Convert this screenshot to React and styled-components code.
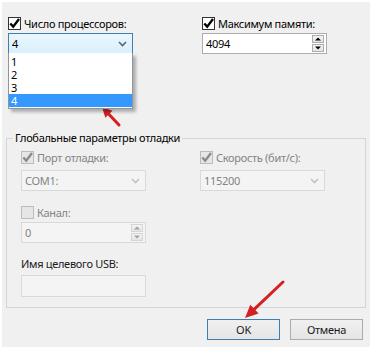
import React from 'react'
import styled, { createGlobalStyle } from 'styled-components'

const GlobalStyle = createGlobalStyle`
  html, body {
    margin: 0;
    padding: 0;
    background: #fff;
  }
  body {
    font-family: "Noto Sans", "Segoe UI", sans-serif;
    font-size: 11px;
    font-weight: 400;
    letter-spacing: -0.3px;
    color: #000;
  }
`

const Page = styled.div`
  position: relative;
  width: 370px;
  height: 348px;
  overflow: hidden;
`

const Dialog = styled.div`
  margin: 2px 0 0 2px;
  width: 368px;
  height: 345px;
  background: #f0f0f0;
  display: flex;
  flex-direction: column;
`

const TopGrid = styled.div`
  display: grid;
  grid-template-columns: 194px 1fr;
  padding: 15px 0 0 6px;
`

const Column = styled.div`
  display: flex;
  flex-direction: column;
  gap: ${p => p.$gap ?? 3}px;
`

const CheckRow = styled.label`
  display: flex;
  align-items: center;
  gap: 3px;
  height: 13px;
  color: ${p => (p.$disabled ? '#838383' : '#000')};
  white-space: nowrap;
`

const Box = styled.span`
  width: 13px;
  height: 13px;
  box-sizing: border-box;
  border: 1px solid ${p => (p.$disabled ? '#bcbcbc' : '#333')};
  background: ${p => (p.$disabled ? '#e6e6e6' : '#fff')};
  display: flex;
  align-items: center;
  justify-content: center;
  flex: none;
`

const Check = ({ checked, disabled, children }) => (
  <CheckRow $disabled={disabled}>
    <Box $disabled={disabled}>
      {checked && (
        <svg width="11" height="11" viewBox="0 0 11 11">
          <path
            d="M1.3 5.4 L4.2 8.6 L10 1"
            fill="none"
            stroke={disabled ? '#8a8a8a' : '#000'}
            strokeWidth="2.3"
          />
        </svg>
      )}
    </Box>
    {children}
  </CheckRow>
)

const Field = styled.div`
  position: relative;
  width: 125px;
  height: ${p => p.$h || 21}px;
  box-sizing: border-box;
  border: 1px solid ${p => (p.$focused ? '#3c7fb1' : p.$disabled ? '#d9d9d9' : '#abadb3')};
  background: ${p =>
    p.$focused
      ? 'linear-gradient(#eaf6fd, #d9f0fc)'
      : p.$disabled
      ? '#f4f4f4'
      : '#fff'};
  color: ${p => (p.$disabled ? '#838383' : '#000')};
  display: flex;
  align-items: center;
  justify-content: space-between;
  padding: 0 2px 0 3px;
`

const Chevron = ({ disabled }) => (
  <svg width="9" height="6" viewBox="0 0 9 6" style={{ marginRight: 3 }}>
    <path
      d="M1 1 L4.5 4.5 L8 1"
      fill="none"
      stroke={disabled ? '#c2c2c2' : '#556677'}
      strokeWidth="1.6"
    />
  </svg>
)

const DropList = styled.ul`
  position: absolute;
  top: 100%;
  left: -1px;
  width: 125px;
  margin: 0;
  padding: 2px 0 1px;
  list-style: none;
  box-sizing: border-box;
  background: #fff;
  border: 1px solid #8a96a3;
  border-top: none;
  box-shadow: 3px 3px 3px rgba(0, 0, 0, 0.28);
  z-index: 2;
`

const DropItem = styled.li`
  height: 13px;
  line-height: 13px;
  font-size: 11px;
  padding-left: 2px;
  background: ${p => (p.$active ? '#3399ff' : 'transparent')};
  color: ${p => (p.$active ? '#fff' : '#000')};
`

const SpinBox = styled.div`
  display: flex;
  flex-direction: column;
  gap: 1px;
`

const SpinBtn = styled.div`
  width: 12px;
  height: 8px;
  box-sizing: border-box;
  border: 1px solid ${p => (p.$disabled ? '#d5d5d5' : '#acacac')};
  background: linear-gradient(#f4f4f4, #e4e4e4);
  display: flex;
  align-items: center;
  justify-content: center;
`

const Tri = ({ up, disabled }) => (
  <svg width="6" height="4" viewBox="0 0 6 4">
    <path d={up ? 'M0 3.5 L3 0.5 L6 3.5 Z' : 'M0 0.5 L6 0.5 L3 3.5 Z'} fill={disabled ? '#a0a0a0' : '#000'} />
  </svg>
)

const Spin = ({ value, disabled }) => (
  <Field $disabled={disabled}>
    <span>{value}</span>
    <SpinBox>
      <SpinBtn $disabled={disabled}><Tri up disabled={disabled} /></SpinBtn>
      <SpinBtn $disabled={disabled}><Tri disabled={disabled} /></SpinBtn>
    </SpinBox>
  </Field>
)

const Group = styled.fieldset`
  margin: 77px 0 0 4px;
  width: 360px;
  box-sizing: border-box;
  border: 1px solid #d5d5d5;
  padding: 0;
  min-width: 0;
`

const Legend = styled.legend`
  margin-left: 6px;
  padding: 0 2px;
  line-height: 14px;
  color: #000;
`

const GroupGrid = styled.div`
  display: grid;
  grid-template-columns: 179px 1fr;
  padding: 6px 0 10px 14px;
  align-items: start;
`

const PlainLabel = styled.div`
  line-height: 16px;
  font-weight: 400;
  color: #1a1a1a;
  margin-top: 13px;
  margin-bottom: 3px;
`

const Spacer = styled.div`
  height: ${p => p.$h}px;
  flex: none;
`

const Buttons = styled.div`
  display: flex;
  justify-content: flex-end;
  gap: 10px;
  margin-top: 11px;
  padding-right: 7px;
`

const Button = styled.button`
  width: 73px;
  height: 21px;
  box-sizing: border-box;
  border: 1px solid ${p => (p.$default ? '#3c7fb1' : '#acacac')};
  background: linear-gradient(#f0f0f0, #e5e5e5);
  font-family: inherit;
  font-size: 11px;
  font-weight: 400;
  letter-spacing: inherit;
  color: #1a1a1a;
  padding: 0;
`

const Overlay = styled.svg`
  position: absolute;
  left: 0;
  top: 0;
  pointer-events: none;
`

export default function App() {
  return (
    <Page>
      <GlobalStyle />
      <Dialog>
        <TopGrid>
          <Column>
            <Check checked>Число процессоров:</Check>
            <Field $focused>
              <span>4</span>
              <Chevron />
              <DropList>
                {['1', '2', '3', '4'].map(n => (
                  <DropItem key={n} $active={n === '4'}>{n}</DropItem>
                ))}
              </DropList>
            </Field>
          </Column>
          <Column>
            <Check checked>Максимум памяти:</Check>
            <Spin value="4094" />
          </Column>
        </TopGrid>

        <Group>
          <Legend>Глобальные параметры отладки</Legend>
          <GroupGrid>
            <Column $gap={0}>
              <Check checked disabled>Порт отладки:</Check>
              <Spacer $h={6} />
              <Field $disabled>
                <span>COM1:</span>
                <Chevron disabled />
              </Field>
              <Spacer $h={15} />
              <Check disabled>Канал:</Check>
              <Spacer $h={3} />
              <Spin value="0" disabled />
              <PlainLabel>Имя целевого USB:</PlainLabel>
              <Field $disabled $h={22} />
            </Column>
            <Column $gap={6}>
              <Check checked disabled>Скорость (бит/с):</Check>
              <Field $disabled>
                <span>115200</span>
                <Chevron disabled />
              </Field>
            </Column>
          </GroupGrid>
        </Group>

        <Buttons>
          <Button $default>OK</Button>
          <Button>Отмена</Button>
        </Buttons>
      </Dialog>

      <Overlay width="370" height="348">
        <line x1="119" y1="125" x2="108.9" y2="114.3" stroke="#d42020" strokeWidth="3" strokeLinecap="round" />
        <polygon points="102,107 112.5,110.8 105.3,117.7" fill="#d42020" />
        <line x1="283" y1="282" x2="254.4" y2="309.1" stroke="#d42020" strokeWidth="3" strokeLinecap="round" />
        <polygon points="245,318 258.6,313.4 250.3,304.7" fill="#d42020" />
      </Overlay>
    </Page>
  )
}
